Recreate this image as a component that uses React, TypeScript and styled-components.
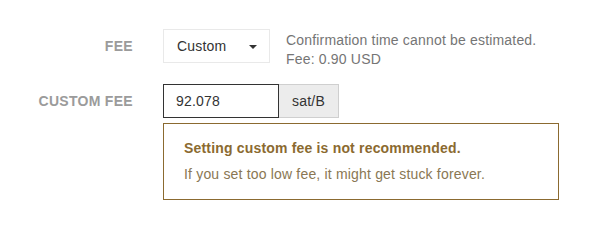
import styled, { createGlobalStyle } from "styled-components";

const GlobalStyle = createGlobalStyle`
  html, body {
    margin: 0;
    padding: 0;
    background: #ffffff;
  }
  body {
    font-family: "Liberation Sans", Arial, sans-serif;
    font-size: 14px;
    letter-spacing: 0.18px;
    color: #333333;
  }
`;

const Colors = {
  label: "#9b9b9b",
  text: "#333333",
  info: "#757575",
  lightBorder: "#e9e9e9",
  darkBorder: "#333333",
  addonBg: "#ececec",
  addonBorder: "#cfcfcf",
  warn: "#8b6a30",
  warnText: "#8a7753",
};

export default function App() {
  return (
    <>
      <GlobalStyle />
      <FeeForm>
        <Row>
          <Label>Fee</Label>
          <Field>
            <Select>
              <span>Custom</span>
              <Caret />
            </Select>
            <Info>
              <p>Confirmation time cannot be estimated.</p>
              <p>Fee: 0.90 USD</p>
            </Info>
          </Field>
        </Row>

        <Row $gap={15}>
          <Label>Custom fee</Label>
          <Column>
            <InputGroup>
              <Input defaultValue="92.078" />
              <Addon>sat/B</Addon>
            </InputGroup>
            <Warning>
              <p className="title">Setting custom fee is not recommended.</p>
              <p className="body">If you set too low fee, it might get stuck forever.</p>
            </Warning>
          </Column>
        </Row>
      </FeeForm>
    </>
  );
}

const FeeForm = styled.div`
  padding-top: 29px;
  display: flex;
  flex-direction: column;
`;

const Row = styled.div<{ $gap?: number }>`
  display: flex;
  align-items: flex-start;
  margin-top: ${(p) => p.$gap ?? 0}px;
`;

const Label = styled.div`
  width: 133px;
  flex-shrink: 0;
  height: 34px;
  line-height: 34px;
  text-align: right;
  padding-right: 30px;
  font-size: 14px;
  font-weight: bold;
  letter-spacing: 0.3px;
  text-transform: uppercase;
  color: ${Colors.label};
`;

const Field = styled.div`
  display: flex;
  align-items: flex-start;
  gap: 16px;
`;

const Column = styled.div`
  display: flex;
  flex-direction: column;
  gap: 5px;
`;

const Select = styled.div`
  box-sizing: border-box;
  width: 107px;
  height: 34px;
  display: flex;
  align-items: center;
  justify-content: space-between;
  padding: 0 12px 0 13px;
  border: 1px solid ${Colors.lightBorder};
  color: ${Colors.text};
  font-size: 14px;
`;

const Caret = styled.span`
  width: 0;
  height: 0;
  border-left: 4px solid transparent;
  border-right: 4px solid transparent;
  border-top: 4px solid ${Colors.text};
  margin-top: 1px;
`;

const Info = styled.div`
  padding-top: 2px;
  color: ${Colors.info};
  font-size: 14px;
  line-height: 19px;
  p {
    margin: 0;
  }
`;

const InputGroup = styled.div`
  display: flex;
  height: 34px;
`;

const Input = styled.input`
  box-sizing: border-box;
  width: 116px;
  height: 34px;
  padding: 0 12px;
  border: 1px solid ${Colors.darkBorder};
  outline: none;
  font-family: "Liberation Sans", Arial, sans-serif;
  font-size: 14px;
  letter-spacing: 0.18px;
  color: ${Colors.text};
`;

const Addon = styled.div`
  box-sizing: border-box;
  width: 60px;
  height: 34px;
  display: flex;
  align-items: center;
  justify-content: center;
  background: ${Colors.addonBg};
  border: 1px solid ${Colors.addonBorder};
  border-left: none;
  color: ${Colors.text};
  font-size: 14px;
`;

const Warning = styled.div`
  box-sizing: border-box;
  width: 396px;
  padding: 14px 20px 15px;
  border: 1px solid ${Colors.warn};
  font-size: 14px;
  line-height: 20px;
  p {
    margin: 0;
  }
  .title {
    font-weight: bold;
    color: ${Colors.warn};
    margin-bottom: 6px;
  }
  .body {
    color: ${Colors.warnText};
  }
`;
